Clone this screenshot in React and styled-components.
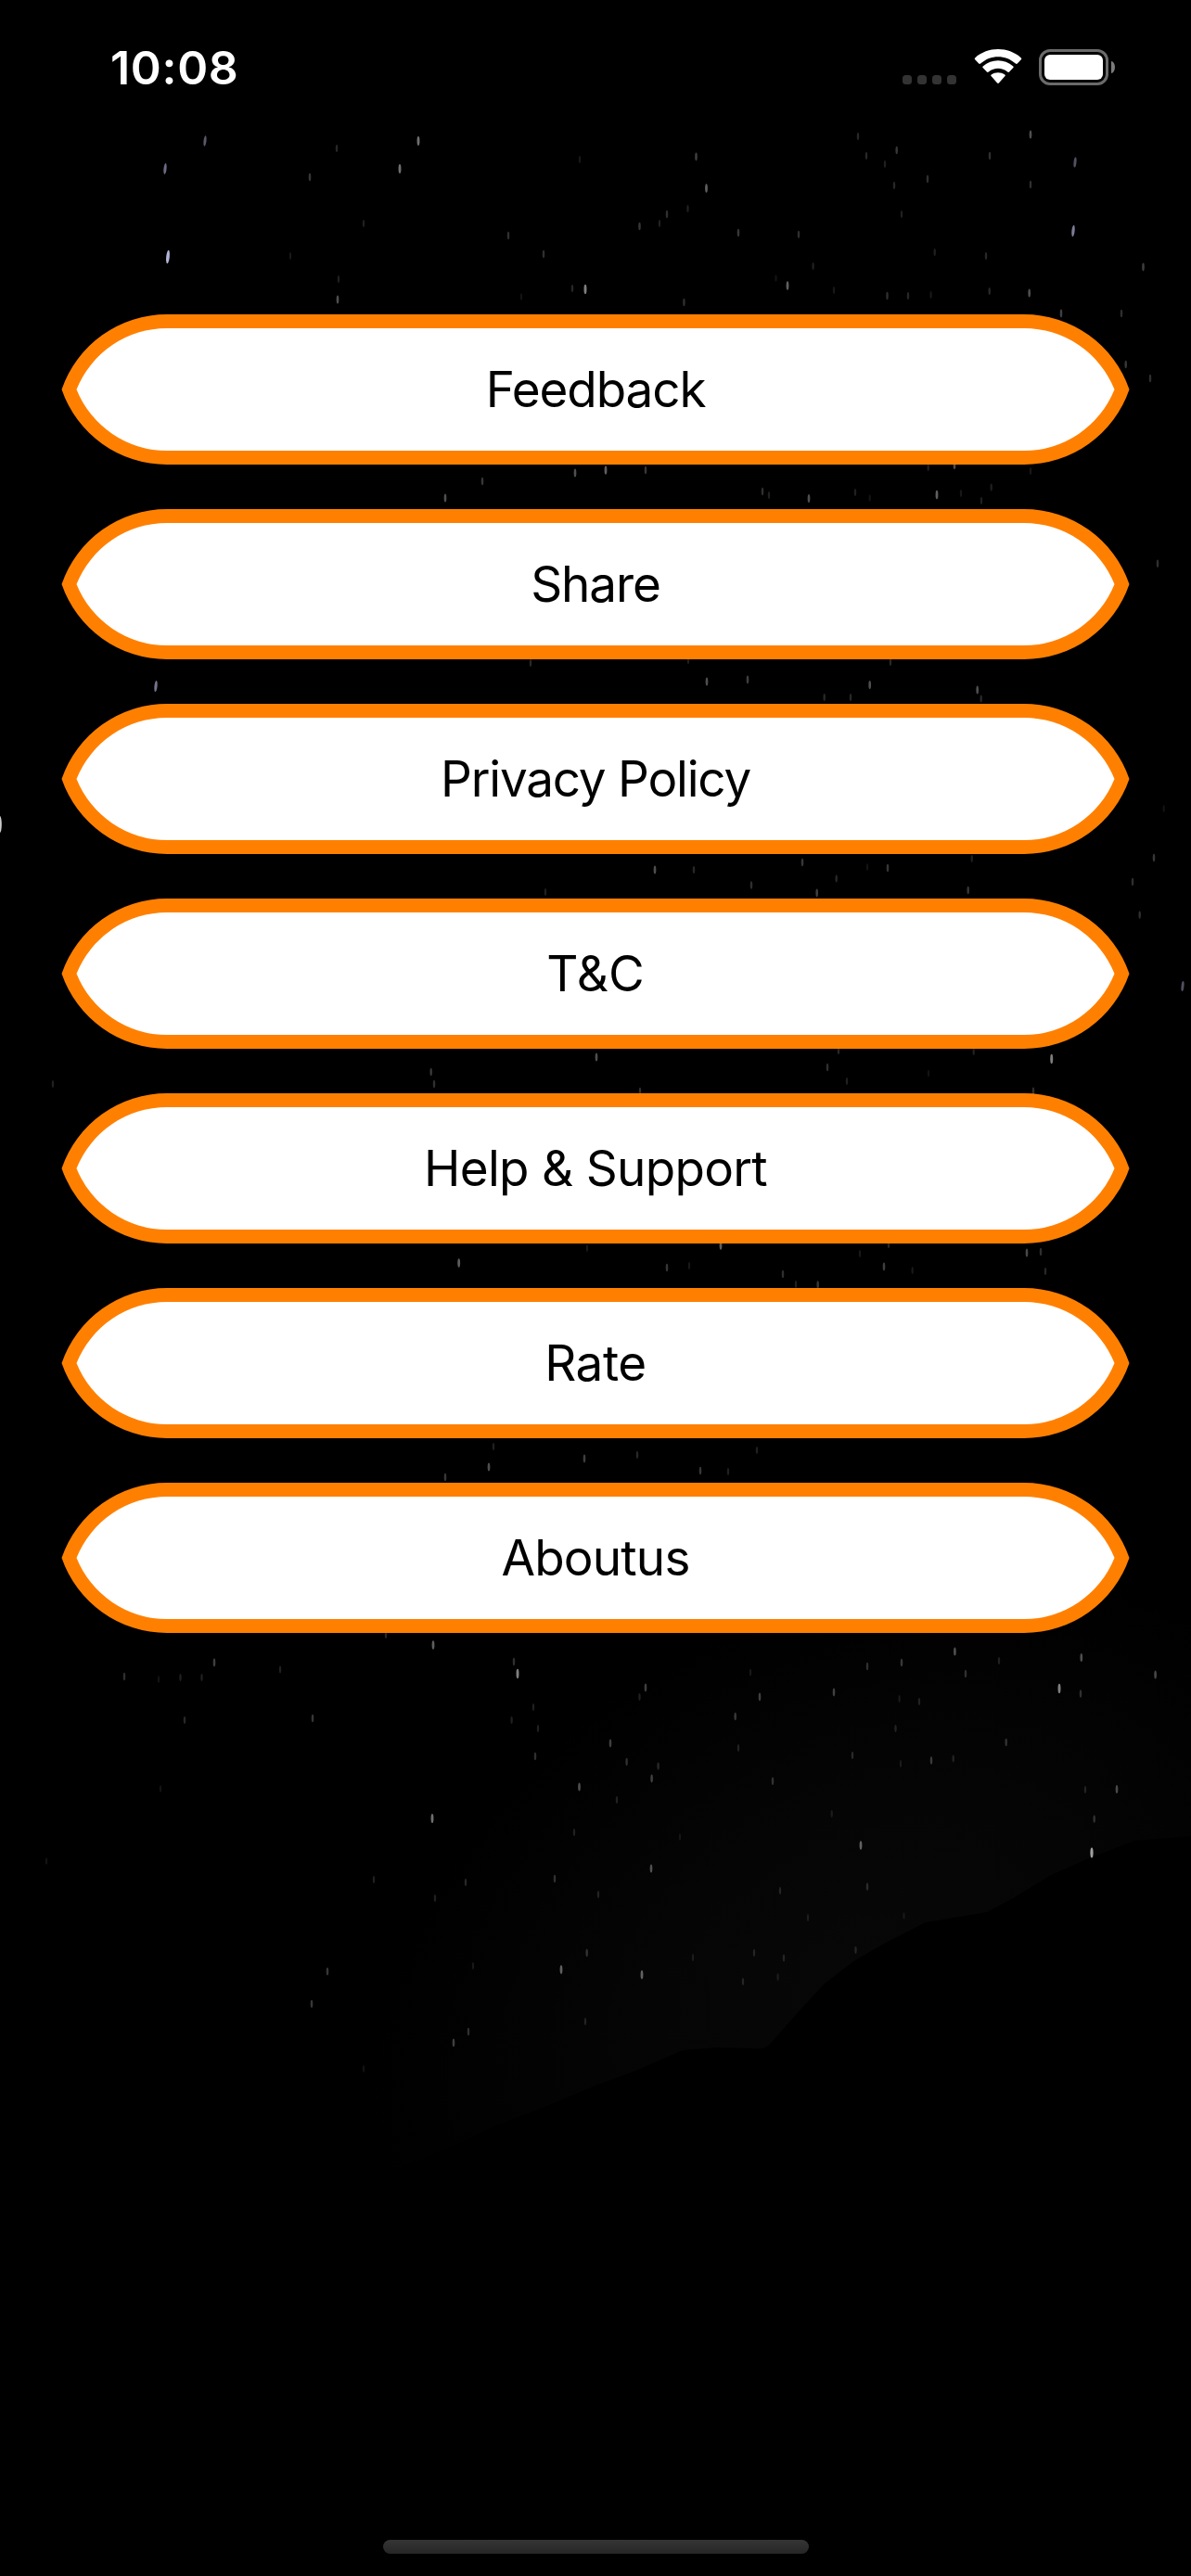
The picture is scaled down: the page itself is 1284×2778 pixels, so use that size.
import React from "react";
import styled, { createGlobalStyle } from "styled-components";

const GlobalStyle = createGlobalStyle`
  html, body { margin: 0; padding: 0; background: #000; }
  *, *::before, *::after { box-sizing: border-box; }
`;

const Screen = styled.div`
  position: relative;
  display: flex;
  flex-direction: column;
  width: 1284px;
  height: 2778px;
  overflow: hidden;
  background: #000;
  color: #fff;
  font-family: Inter, Roboto, "Liberation Sans", sans-serif;
`;

const Backdrop = styled.svg`
  position: absolute;
  inset: 0;
  display: block;
`;

const StatusBar = styled.header`
  position: relative;
  display: flex;
  align-items: center;
  justify-content: space-between;
  height: 144px;
  padding: 0 82px 0 119px;
`;

const Clock = styled.time`
  margin-top: 2px;
  font-size: 50px;
  line-height: 60px;
  font-weight: 600;
  letter-spacing: 0.7px;
`;

const Indicators = styled.div`
  display: flex;
  align-items: center;
`;

const Dots = styled.div`
  display: flex;
  gap: 6px;
  margin: 27px 19px 0 0;
`;

const Dot = styled.i`
  width: 10px;
  height: 10px;
  border-radius: 3.5px;
  background: #333;
`;

const Wifi = styled.svg`
  display: block;
  width: 52px;
  height: 38px;
  margin-right: 18px;
`;

const Battery = styled.div`
  display: flex;
  width: 75px;
  height: 39px;
  padding: 3px;
  border: 3px solid #6a6a6a;
  border-radius: 12px;
`;

const Charge = styled.div`
  flex: 1;
  border-radius: 6px;
  background: #fff;
`;

const BatteryCap = styled.div`
  width: 4px;
  height: 13px;
  margin-left: 3px;
  border-radius: 0 4px 4px 0 / 0 6.5px 6.5px 0;
  background: #7b7b7b;
`;

const Menu = styled.nav`
  position: relative;
  display: flex;
  flex: 1;
  flex-direction: column;
  gap: 48px;
  padding: 195px 60px 0;
`;

const MenuButton = styled.button`
  display: flex;
  width: 1164px;
  height: 162px;
  padding: 15px;
  border: 0;
  background: #ff8000;
  color: #000;
  font: inherit;
  clip-path: path("M6.5 81A120 120 0 0 1 120 0H1044A120 120 0 0 1 1157.5 81A120 120 0 0 1 1044 162H120A120 120 0 0 1 6.5 81Z");
`;

const ButtonFace = styled.span`
  display: flex;
  align-items: center;
  justify-content: center;
  flex: 1;
  height: 132px;
  background: #fff;
  font-size: 53px;
  line-height: 64px;
  letter-spacing: ${(p) => p.$tracking}px;
  clip-path: path("M7.5 66A105 105 0 0 1 105 0H1029A105 105 0 0 1 1126.5 66A105 105 0 0 1 1029 132H105A105 105 0 0 1 7.5 66Z");
`;

const HomeArea = styled.footer`
  position: relative;
  display: flex;
  justify-content: center;
  height: 39px;
`;

const HomeBar = styled.div`
  width: 459px;
  height: 15px;
  border-radius: 8px;
  background: linear-gradient(#353535, #262626);
`;

const items = [
  { label: "Feedback", tracking: -1.1 },
  { label: "Share", tracking: -1.1 },
  { label: "Privacy Policy", tracking: -1.2 },
  { label: "T&C", tracking: 0.1 },
  { label: "Help & Support", tracking: -0.7 },
  { label: "Rate", tracking: -0.4 },
  { label: "Aboutus", tracking: -0.8 },
];

// x, y, brightness
const stars = [
  [363,160,.25],[451,152,.7],[334,191,.35],[431,182,.7],[392,241,.2],[313,276,.15],[548,254,.3],
  [586,274,.3],[365,301,.2],[364,323,.5],[631,312,.8],[617,311,.25],[625,172,.15],[562,320,.12],
  [750.5,169,.4],[761.5,203,.6],[741.5,225,.2],[719,231,.3],[711,241,.2],[689.5,244,.35],[796,251,.35],
  [861,253,.3],[849,308,.6],[876.6,287,.2],[899,313,.15],[737.4,326,.3],[836.5,300,.12],[925,147,.25],
  [934,168,.25],[966.7,162,.35],[954,177,.2],[964,200,.25],[1000,193,.3],[972,231,.2],[1067,168,.3],
  [1111,145,.5],[1111,199,.3],[1007.7,272,.2],[1063,276,.25],[1066.7,314,.25],[1109.7,316,.5],
  [1232.5,288,.4],[956.5,319,.3],[979,319,.25],[1003.6,318,.15],
  [1144,338,.4],[1209,338,.3],[1213.7,393,.35],[1240,408,.3],[1111,508,.15],
  [480,537,.5],[520,519,.35],[620,510,.5],[653,507,.6],[696,507,.35],[822,530,.3],[829,534,.2],
  [872,537.6,.5],[922,531,.2],[1010,533.6,.6],[1029,501.5,.5],[1000.7,504,.2],[1058,540,.2],
  [1068.7,525.6,.2],[1036,532,.15],[937.7,537,.12],[1248,607.7,.3],
  [572,715,.25],[742,712,.2],[762,735,.5],[806,733,.4],
  [937.7,738.6,.5],[888.7,752,.25],[917,752,.25],[960,714,.25],[1053.7,744,.5],[1057.7,753.5,.25],
  [706,938,.5],[748,938,.25],[810,954.5,.3],[588,962,.2],[1254.7,872,.12],
  [865,930,.35],[880.7,963,.4],[901.7,947.5,.25],[957,936,.35],[935,935,.12],[1043.7,960,.35],
  [1047.7,926,.2],[1244,925,.35],[1221,951,.3],[1228.7,986.6,.3],
  [464.7,1156,.35],[468,1169,.3],[643,1140,.5],[690,1177,.3],[57,1169,.2],
  [1133.7,1142,.8],[1114,1176.6,.3],[892,1151,.3],[913,1166,.2],[904,1133,.25],[1049.7,1134,.2],[1001,1157.6,.12],
  [494.7,1362,.6],[719,1367,.35],[743,1365,.15],[777,1343,.6],[633,1346,.15],
  [1107,1351,.45],[1122,1350,.3],[1127,1371,.25],[953,1366,.4],[958,1342,.25],[927,1352,.15],
  [881.7,1385.5,.35],[844,1374,.3],[858,1385,.2],[983.7,1370,.15],
  [527,1582,.5],[480,1593,.35],[532,1560,.2],[630,1573,.4],[687,1569,.25],[755,1586,.35],[785,1587,.2],[816,1564,.2],
  [467,1774,.6],[558,1805,.8],[554,1792,.3],[231,1793,.4],[134,1808,.3],[194.5,1809,.2],[217.5,1809,.2],
  [171,1811,.12],[302,1800.5,.2],[337,1853,.35],[199,1855,.25],[575,1841,.2],[551.6,1855,.2],[580,1864,.2],
  [577,1894,.3],[624.5,1927,.5],[466,1961,.7],[619,1976,.2],[173,1929,.12],[50,2007,.12],[403,2027,.2],
  [502,2030,.25],[598,2026,.3],[469,2047,.2],[353,2126,.35],[336,2161,.35],[605,2124,.6],[632.7,2106,.3],
  [510,2120,.15],[505,2191,.3],[489,2203,.4],[631,2180,.2],[392,2231,.12],[416,1763,.25],
  [1029.4,1781,.5],[1165.8,1787.5,.5],[972,1793,.35],[935,1797,.3],[1041,1805,.3],[1077,1791,.2],
  [1245.6,1806,.45],[696,1820,.4],[689.5,1830,.2],[1142,1821,.8],[1165,1826.5,.3],[819,1830,.4],
  [899,1825,.4],[991,1835,.2],[969.6,1832,.15],[809,1803.6,.15],[792.7,1851,.35],[796,1885,.2],
  [965.5,1864,.2],[1084.7,1879,.3],[658,1880,.4],[675.6,1900,.3],[709.6,1904.6,.25],[702.6,1918,.4],
  [833,1920.7,.3],[919,1893,.25],[1004,1898.5,.35],[1027.7,1896.6,.2],[971,1902,.15],[665,1941,.2],
  [1204,1929.5,.45],[1170,1930,.2],[1179.7,1961.6,.3],[1177,1998,1],[928,1990,.6],[702,2015,.5],
  [935,2034.7,.25],[841,2039,.2],[645,2043,.2],[871,2068,.15],[974.5,2066,.12],[922.5,2103,.2],
  [813,2106,.2],[845,2111.6,.2],[747,2111,.15],[838.6,2132,.15],[692,2129.6,.6],[801,2137,.2],
  [896.7,1956,.15],[733,1981,.12],
];

const blueStars = [[221,152,.5],[178,182,.6],[181,277,1],[1159,175,.45],[1157,249,.7],[168,740,.65],[1275,1063.5,.45]];

function NightSky() {
  return (
    <Backdrop width="1284" height="2778" viewBox="0 0 1284 2778" aria-hidden="true">
      <defs>
        <radialGradient id="glow" gradientUnits="userSpaceOnUse" cx="0" cy="0" r="1" gradientTransform="translate(930 2130) rotate(-28) scale(560 400)">
          <stop offset="0" stopColor="#070708" />
          <stop offset="0.45" stopColor="#050506" />
          <stop offset="1" stopColor="#000" />
        </radialGradient>
      </defs>
      <path
        fill="url(#glow)"
        d="M300 1600H1284V1980L1223 1985L1174 2004L1133 2022L1092 2047L1064 2062L998 2073L953 2096L920 2115L888 2140L863 2167L832 2202Q826 2211 812 2209L773 2208L736 2211L683 2234L642 2249L580 2275L540 2290L300 2400Z"
      />
      {stars.map(([x, y, b]) => (
        <ellipse key={`${x}-${y}`} cx={x} cy={y} rx={1.1 + b * 0.5} ry={3.6 + b * 2} fill="#dcdcdc" opacity={b * 0.72} />
      ))}
      {blueStars.map(([x, y, b]) => (
        <ellipse key={`${x}-${y}`} cx={x} cy={y} rx={1.2 + b * 0.6} ry={4.2 + b * 3} fill="#d4d2ff" opacity={b * 0.85} transform={`rotate(6 ${x} ${y})`} />
      ))}
      <ellipse cx="0" cy="889" rx="1.8" ry="9" fill="#ccc" />
    </Backdrop>
  );
}

function WifiIcon() {
  return (
    <Wifi viewBox="0 0 52 38" fill="#fff">
      <path d="M1.2 11.3Q.2 10.3 1.2 9.4C15-3 37-3 50.8 9.4Q51.8 10.3 50.8 11.3L46.8 15.4Q45.9 16.3 44.9 15.5C34 5.7 18 5.7 7.1 15.5Q6.1 16.3 5.2 15.4Z" />
      <path d="M9.6 20.1Q8.8 19.2 9.7 18.4C19.2 10.2 32.8 10.2 42.3 18.4Q43.2 19.2 42.4 20.1L38.1 24.5Q37.2 25.4 36.2 24.6C30 19.6 22 19.6 15.8 24.6Q14.8 25.4 13.9 24.5Z" />
      <path d="M18.5 29.1Q17.7 28.2 18.7 27.5C23.2 24.5 28.8 24.5 33.3 27.5Q34.3 28.2 33.5 29.1L26.9 36.6Q26 37.5 25.1 36.6Z" />
    </Wifi>
  );
}

export default function App() {
  return (
    <Screen>
      <GlobalStyle />
      <NightSky />
      <StatusBar>
        <Clock>10:08</Clock>
        <Indicators>
          <Dots>
            <Dot />
            <Dot />
            <Dot />
            <Dot />
          </Dots>
          <WifiIcon />
          <Battery>
            <Charge />
          </Battery>
          <BatteryCap />
        </Indicators>
      </StatusBar>
      <Menu>
        {items.map(({ label, tracking }) => (
          <MenuButton key={label} type="button">
            <ButtonFace $tracking={tracking}>{label}</ButtonFace>
          </MenuButton>
        ))}
      </Menu>
      <HomeArea>
        <HomeBar />
      </HomeArea>
    </Screen>
  );
}
